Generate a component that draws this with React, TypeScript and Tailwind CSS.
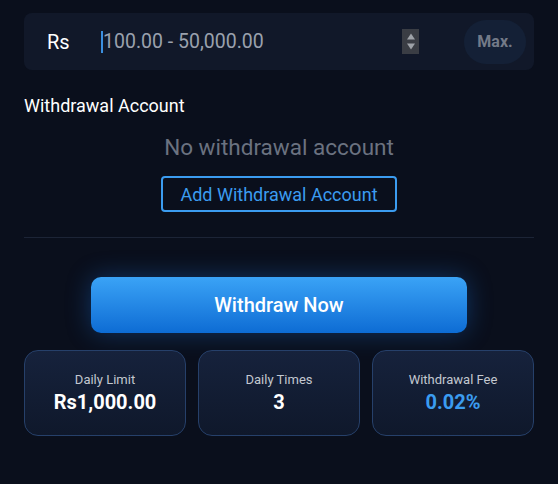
import React from 'react';

const stats = [
  { label: 'Daily Limit', value: 'Rs1,000.00', accent: false },
  { label: 'Daily Times', value: '3', accent: false },
  { label: 'Withdrawal Fee', value: '0.02%', accent: true },
];

const App: React.FC = () => {
  return (
    <div className="w-[558px] h-[484px] bg-[#0a0f1c] px-6 pt-[13px] font-['Roboto',sans-serif]">
      {/* Amount input */}
      <div className="h-[57px] rounded-lg bg-[#111829] flex items-center pl-[23px] pr-2">
        <span className="text-white text-[20px] w-[54px]">Rs</span>
        <div className="flex-1 flex items-center">
          <span className="w-[2px] h-[22px] bg-[#3b8fe0]"></span>
          <span className="text-[19.5px] text-[#9aa1ad]">100.00 - 50,000.00</span>
        </div>
        <div className="w-[17px] h-[25px] bg-[#3a3d44] flex flex-col items-center justify-center gap-[3px] mr-[45px]">
          <svg width="10" height="7" viewBox="0 0 10 7"><path d="M1 6.5 L5 0.5 L9 6.5 Z" fill="#9ea2a8" /></svg>
          <svg width="10" height="7" viewBox="0 0 10 7"><path d="M1 0.5 L5 6.5 L9 0.5 Z" fill="#9ea2a8" /></svg>
        </div>
        <div className="w-[62px] h-[44px] rounded-full bg-[#142036] flex items-center justify-center">
          <span className="text-[16px] font-bold text-[#737a88]">Max.</span>
        </div>
      </div>

      {/* Withdrawal account */}
      <div className="mt-[24px] text-white text-[18px] leading-[24px]">Withdrawal Account</div>
      <div className="flex flex-col items-center">
        <div className="mt-[16px] text-[22.5px] leading-[26px] text-[#6b7280]">No withdrawal account</div>
        <button className="mt-[16px] h-[36px] px-[17px] border-2 border-[#3b9cf0] rounded-[4px] text-[#3b9cf0] text-[18px]">
          Add Withdrawal Account
        </button>
      </div>
      <div className="mt-[25px] h-px bg-[#1c2436]"></div>

      {/* Withdraw button */}
      <div className="mt-[39px] flex justify-center">
        <button className="w-[376px] h-[56px] rounded-[10px] bg-gradient-to-b from-[#3aa3f6] to-[#0d6cd4] text-white text-[20px] font-medium shadow-[0_0_24px_rgba(30,120,230,0.35)]">
          Withdraw Now
        </button>
      </div>

      {/* Stats */}
      <div className="mt-[17px] grid grid-cols-3 gap-3">
        {stats.map(s => (
          <div
            key={s.label}
            className="h-[86px] rounded-[14px] border border-[#26406a] bg-gradient-to-b from-[#16223c] to-[#0f182b] flex flex-col items-center justify-center"
          >
            <span className="text-[13px] text-[#c3c8d0] leading-[18px]">{s.label}</span>
            <span className={`text-[20px] font-bold leading-[26px] ${s.accent ? 'text-[#3b9cf0]' : 'text-white'}`}>{s.value}</span>
          </div>
        ))}
      </div>
    </div>
  );
};

export default App;
